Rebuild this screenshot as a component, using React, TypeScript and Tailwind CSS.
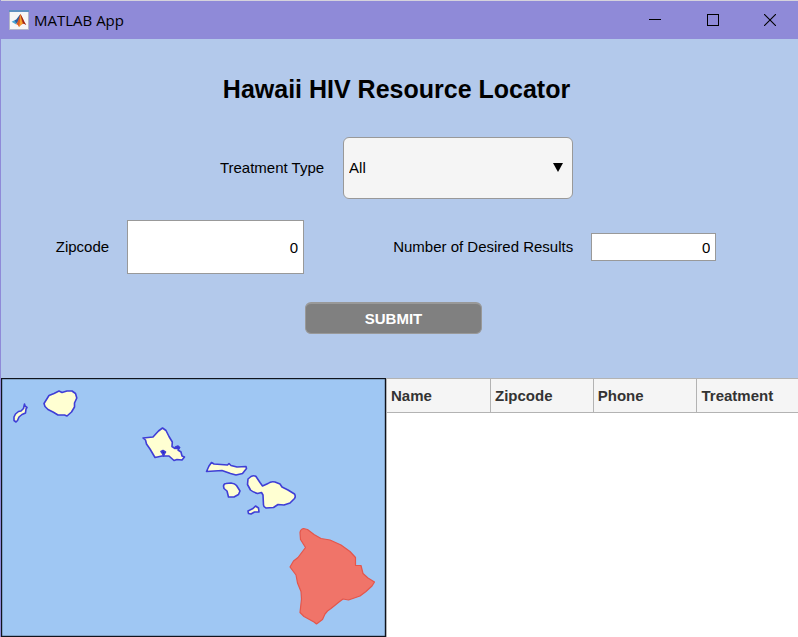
import { useState } from "react";

const islandClass = "fill-[#ffffd2] stroke-[#3f3ed6]";

function MatlabIcon() {
  return (
    <svg viewBox="0 0 20 20" className="h-5 w-5 shrink-0" aria-hidden="true">
      <rect x="0.5" y="0.5" width="19" height="19" fill="#f6f6f6" stroke="#b3b7c9" />
      <rect x="0" y="0" width="20" height="2" fill="#5d8fc0" />
      <path d="M2.6 11.8 6.6 9.8 9.2 12.2 6.8 14.2Z" fill="#49a5d2" />
      <path d="M5.6 10.4C8 9.6 9.2 6.4 11.4 4L10.4 10 7.4 13.2Z" fill="#2d5c9e" />
      <path d="M6.8 14.2C9 13.2 9.4 8.6 11.4 4 13.4 6.8 14.8 11.6 17.2 15 15 13 13 13.4 10 17 9.2 15.2 8.4 14 6.8 14.2Z" fill="#dd5a20" />
      <path d="M11.4 4C10.8 9 11.2 13 10 17 11.6 15.2 12.6 14 13.6 13.6 12.6 10.5 12 7 11.4 4Z" fill="#f5a52e" />
      <path d="M11.4 4C13.4 6.8 14.8 11.6 17.2 15L14.4 13.6C13.2 10.6 12.2 7 11.4 4Z" fill="#9c2416" />
    </svg>
  );
}

function TitleBar() {
  return (
    <header className="flex h-[39px] items-center border-t border-[#d5d3dc] bg-[#8f8ad8] pl-2 text-black">
      <MatlabIcon />
      <span className="ml-[5px] flex-1 font-['Open_Sans','Noto_Sans',sans-serif] text-[15px] leading-5">MATLAB App</span>
      <button type="button" aria-label="Minimize" className="flex h-full w-[58px] items-center justify-center">
        <svg viewBox="0 0 12 12" className="h-3 w-3" shapeRendering="crispEdges" aria-hidden="true">
          <path d="M0 5.5H12" stroke="currentColor" />
        </svg>
      </button>
      <button type="button" aria-label="Maximize" className="flex h-full w-[58px] items-center justify-center">
        <svg viewBox="0 0 12 12" className="h-3 w-3" shapeRendering="crispEdges" aria-hidden="true">
          <rect x="0.5" y="0.5" width="11" height="11" fill="none" stroke="currentColor" />
        </svg>
      </button>
      <button type="button" aria-label="Close" className="flex h-full w-14 items-center justify-center">
        <svg viewBox="0 0 12 12" className="h-3 w-3" aria-hidden="true">
          <path d="M0 0 12 12M12 0 0 12" stroke="currentColor" strokeWidth="1.1" />
        </svg>
      </button>
    </header>
  );
}

function SearchForm() {
  const [zipcode, setZipcode] = useState("0");
  const [count, setCount] = useState("0");

  return (
    <form className="flex flex-col items-center pt-[34px] pr-1.5 pb-11" onSubmit={(e) => e.preventDefault()}>
      <h1 className="text-[25px] leading-8 font-bold">Hawaii HIV Resource Locator</h1>

      <div className="mt-8 flex items-center gap-[19px]">
        <label htmlFor="treatment">Treatment Type</label>
        <div className="relative">
          <select
            id="treatment"
            defaultValue="All"
            className="block h-[62px] w-[230px] appearance-none rounded-md border border-[#999] bg-[#f5f5f5] px-[5px]"
          >
            <option>All</option>
          </select>
          <svg viewBox="0 0 10 9" className="pointer-events-none absolute top-[26px] right-2.5 h-[9px] w-2.5" aria-hidden="true">
            <path d="M0 0H10L5 9Z" />
          </svg>
        </div>
      </div>

      <div className="mt-[21px] flex items-center justify-center gap-[89px] pr-[21px]">
        <div className="flex items-center gap-[18px]">
          <label htmlFor="zipcode">Zipcode</label>
          <input
            id="zipcode"
            inputMode="numeric"
            value={zipcode}
            onChange={(e) => setZipcode(e.target.value)}
            className="h-[54px] w-[177px] border border-[#999] bg-white px-[5px] text-right"
          />
        </div>
        <div className="flex items-center gap-[18px]">
          <label htmlFor="count">Number of Desired Results</label>
          <input
            id="count"
            inputMode="numeric"
            value={count}
            onChange={(e) => setCount(e.target.value)}
            className="h-7 w-[125px] border border-[#999] bg-white px-[5px] text-right"
          />
        </div>
      </div>

      <div className="mt-7 pr-1.5">
        <button type="submit" className="block h-8 w-[177px] rounded-md border border-t-2 border-[#999] bg-[#808080] font-bold text-white">
          SUBMIT
        </button>
      </div>
    </form>
  );
}

function IslandMap() {
  return (
    <svg viewBox="1 378 385 259" className="block w-full" role="img" aria-label="Map of the Hawaiian islands">
      <rect x="1.5" y="378.5" width="384" height="258" fill="#9fc7f3" stroke="#10141c" strokeWidth="1.4" />
      <g className={islandClass} strokeWidth="1.6" strokeLinejoin="round">
        <path d="M24.5 404 25 406 27 407.5 26 409 25.5 413 22 414.5 19 417 17.5 420.5 16 422 14 420.5 14 417 15.5 414 18.5 411.5 21 411 23.5 408.5Z" />
        <path d="M44 403.5 46.5 399.5 49 395.5 54 393.5 59 391 62 392.5 67 391 72 391 75.5 393.5 76.8 398 74.5 403 74.5 407 71.5 412 67 416 64.5 415 58 415 53 412 48 409.5 45 406.5Z" />
        <path d="M143 438 153 437 158.5 431 162.5 428 166 430.5 169 436.5 172.3 442 172 446.5 175 448.5 179.5 447.5 178 450 181 452 182 456 184.5 457 182 460 177 459.5 174 460.5 169 456 162 456 155 457.5 150 449 146.5 444 145.5 440Z" />
        <path d="M161 451.5 163 450.5 165.5 452 164.5 453.5 163.5 456 162.5 453.5ZM175.5 447 178 446 179.5 447.5 176.5 448.5Z" className="fill-[#2525bd]" />
        <path d="M206.5 471.5 209 466 211.5 462.5 214 464 227.5 465 229 463.5 231 465.5 237 467 246 466.5 246.5 468.5 242.5 473.5 236 475 230.5 473.5 222 470.5Z" />
        <path d="M223.5 486Q224 483.5 226 483.5L231 483Q235 483.5 236.5 485.5L240 491 238.5 494.5 234 497 228.5 497 227 491 224 488.5Z" />
        <path d="M251 476.5Q254 475 256 476.5L260 482.5 262.5 486 268 483.5Q271 481 275 482L280 484 282 487 288 490 294.5 494Q296 496.500 294.500 498.500L290 503 284 505 278 504.5 273.5 507.5 266 508Q263.500 507 263.5 505L263 495 261.5 492.5 257.5 493.5Q253 492 250.5 490L247.5 484.5 248 479Z" />
        <path d="M248 511 253 508.5 255.5 506 258.5 508 259 512 254.5 512 251 514 248.5 513.5Z" />
      </g>
      <path
        d="M300 532.5Q300.500 529 303.5 528.5L307.5 529.5 314 534.5 321 538.5 330 540 341 545 350 551.5 355.5 557.5 355.5 565.5 361 565.5 363 573.5 368 578 374.5 582 372 586 366 591.5 360 596 348.5 600 343 599 339 602 331 608.5 327.5 611 325 614 322.5 619.5 316.5 624 314 622 304 616.5 300 612.5 301.5 599 301 591.5 297.5 583 296 575 290 567 293.5 561 298 557.5 305.5 547.5 300.5 539.5Z"
        className="fill-[#f07469] stroke-[#e4564b]"
        strokeWidth="1.2"
        strokeLinejoin="round"
      />
    </svg>
  );
}

function ResultsTable() {
  const columns = ["Name", "Zipcode", "Phone", "Treatment"];
  return (
    <div className="overflow-hidden border-l border-[#b3b3b3] bg-white">
      <table className="w-full table-fixed border-separate border-spacing-0">
        <thead>
          <tr className="h-[35px] bg-[#f5f5f5]">
            {columns.map((name) => (
              <th
                key={name}
                scope="col"
                className="w-1/4 border-y border-r border-[#b3b3b3] px-1 text-left font-bold text-[#333] first:w-[104px] last:w-auto last:border-r-0 last:px-[5px]"
              >
                {name}
              </th>
            ))}
          </tr>
        </thead>
      </table>
    </div>
  );
}

export default function App() {
  return (
    <div className="flex min-h-screen flex-col border-l border-[#8f8ad8] bg-[#b3c9eb] font-['Liberation_Sans',Arial,sans-serif] text-[15px] leading-5 text-black">
      <TitleBar />
      <main className="flex flex-1 flex-col">
        <SearchForm />
        <div className="grid flex-1 grid-cols-[385fr_412fr] bg-white">
          <IslandMap />
          <ResultsTable />
        </div>
      </main>
    </div>
  );
}
